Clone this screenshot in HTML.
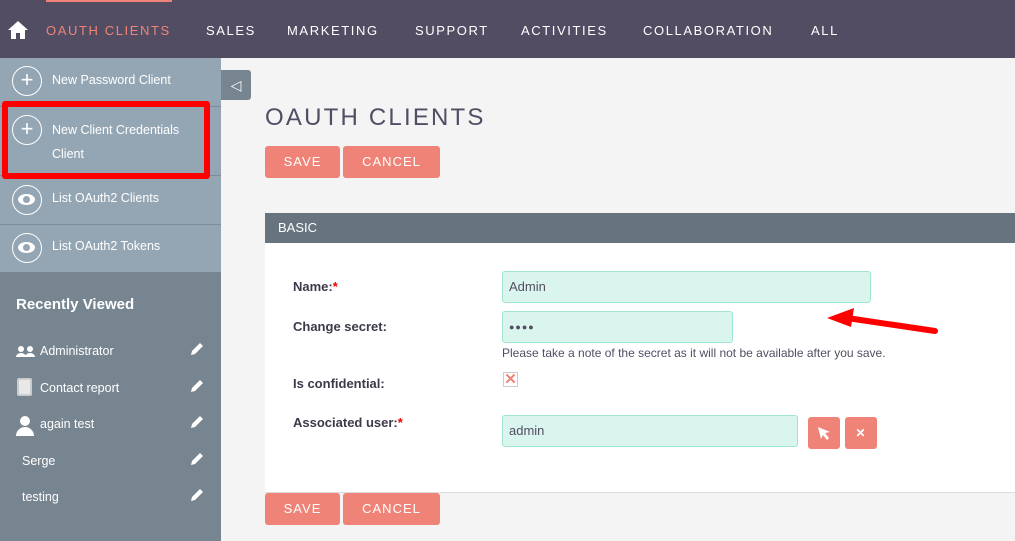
<!DOCTYPE html>
<html><head><style>
*{box-sizing:border-box;margin:0;padding:0}
body{width:1015px;height:541px;overflow:hidden;background:#f4f4f4;font-family:"Liberation Sans",sans-serif;position:relative}
.nav{position:absolute;left:0;top:0;width:1015px;height:58px;background:#534d64}
.nav span{position:absolute;top:23px;font-size:13px;letter-spacing:1.6px;color:#fff}
.side{position:absolute;left:0;top:58px;width:221px;height:483px;background:#778591}
.light{position:absolute;left:0;top:0;width:221px;height:214px;background:#94a6b4}
.item{position:absolute;left:0;width:221px;border-bottom:1px solid #7d8d9a;color:#fff;font-size:12.5px}
.circ{position:absolute;left:12px;width:30px;height:30px;border:1.5px solid #fff;border-radius:50%}
.lbl{position:absolute;left:52px}
.rv{position:absolute;color:#fff;font-size:12.5px}
.pen{position:absolute;left:190px}
.btn{position:absolute;height:32px;background:#f08377;color:#fff;font-size:13px;letter-spacing:1px;text-align:center;line-height:32px;border-radius:3px}
.lab{position:absolute;left:293px;font-size:13px;font-weight:bold;color:#3c3a4a}
.lab b{color:#e00}
.inp{position:absolute;background:#d9f5ed;border:1px solid #a0e5d0;border-radius:3px;font-size:13px;color:#534d64;padding-left:6px;line-height:30px}
</style></head><body>
<div class="nav">
<div style="position:absolute;left:46px;top:0;width:126px;height:2px;background:#f08377"></div>
<svg style="position:absolute;left:8px;top:21px" width="20" height="18" viewBox="0 0 20 18"><path d="M10 0L0 9h3v9h5v-6h4v6h5V9h3z" fill="#fff"/></svg>
<span style="left:46px;color:#f08377">OAUTH CLIENTS</span>
<span style="left:206px">SALES</span>
<span style="left:287px">MARKETING</span>
<span style="left:415px">SUPPORT</span>
<span style="left:521px">ACTIVITIES</span>
<span style="left:643px">COLLABORATION</span>
<span style="left:811px">ALL</span>
</div>
<div class="side"><div class="light"></div>
<div class="item" style="top:0;height:49px"><div class="circ" style="top:8px;text-align:center;line-height:25px;font-size:22px">+</div><div class="lbl" style="top:15px">New Password Client</div></div>
<div class="item" style="top:49px;height:69px"><div class="circ" style="top:8px;text-align:center;line-height:25px;font-size:22px">+</div><div class="lbl" style="line-height:24px;top:11px">New Client Credentials<br>Client</div></div>
<div class="item" style="top:118px;height:49px"><div class="circ" style="top:9px"><div style="position:absolute;left:5px;top:8px;width:17px;height:11px;border-radius:50%;background:#fff"></div><div style="position:absolute;left:10px;top:10px;width:7px;height:7px;border-radius:50%;background:#94a6b4"></div></div><div class="lbl" style="top:15px">List OAuth2 Clients</div></div>
<div class="item" style="top:167px;height:47px;border:none"><div class="circ" style="top:8px"><div style="position:absolute;left:5px;top:8px;width:17px;height:11px;border-radius:50%;background:#fff"></div><div style="position:absolute;left:10px;top:10px;width:7px;height:7px;border-radius:50%;background:#94a6b4"></div></div><div class="lbl" style="top:14px">List OAuth2 Tokens</div></div>
<div style="position:absolute;left:2px;top:43px;width:208px;height:78px;border:6px solid #f00;border-radius:3px"></div>
<div class="rv" style="left:16px;top:238px;font-size:15px;font-weight:bold">Recently Viewed</div>
<svg style="position:absolute;left:16px;top:288px" width="19" height="11"><circle cx="5" cy="3" r="3" fill="#fff"/><circle cx="14" cy="3" r="3" fill="#fff"/><path d="M0 11a5 4 0 0 1 10 0zM9 11a5 4 0 0 1 10 0z" fill="#fff"/></svg>
<div class="rv" style="left:40px;top:286px">Administrator</div>
<div style="position:absolute;left:17px;top:320px;width:15px;height:18px;background:#e8e8e8;border-radius:2px;border:2px solid #ccc"></div>
<div class="rv" style="left:40px;top:323px">Contact report</div>
<div style="position:absolute;left:20px;top:358px;width:10px;height:10px;border-radius:50%;background:#fff"></div>
<div style="position:absolute;left:16px;top:369px;width:18px;height:9px;border-radius:9px 9px 0 0;background:#fff"></div>
<div class="rv" style="left:40px;top:359px">again test</div>
<div class="rv" style="left:22px;top:396px">Serge</div>
<div class="rv" style="left:22px;top:432px">testing</div>
<svg class="pen" style="top:284px" width="14" height="14"><path d="M1 13l1-4 8-8 3 3-8 8z" fill="#fff"/></svg>
<svg class="pen" style="top:321px" width="14" height="14"><path d="M1 13l1-4 8-8 3 3-8 8z" fill="#fff"/></svg>
<svg class="pen" style="top:357px" width="14" height="14"><path d="M1 13l1-4 8-8 3 3-8 8z" fill="#fff"/></svg>
<svg class="pen" style="top:394px" width="14" height="14"><path d="M1 13l1-4 8-8 3 3-8 8z" fill="#fff"/></svg>
<svg class="pen" style="top:430px" width="14" height="14"><path d="M1 13l1-4 8-8 3 3-8 8z" fill="#fff"/></svg>
</div>
<div style="position:absolute;left:221px;top:70px;width:30px;height:30px;background:#778591;border-radius:0 3px 3px 0;color:#fff;font-size:14px;text-align:center;line-height:30px">◁</div>
<div style="position:absolute;left:265px;top:104px;font-size:24px;letter-spacing:2.2px;color:#534d64">OAUTH CLIENTS</div>
<div class="btn" style="left:265px;top:146px;width:75px">SAVE</div>
<div class="btn" style="left:343px;top:146px;width:97px">CANCEL</div>
<div style="position:absolute;left:265px;top:213px;width:750px;height:30px;background:#677480;color:#fff;font-size:13px;padding:7px 0 0 13px">BASIC</div>
<div style="position:absolute;left:265px;top:243px;width:750px;height:250px;background:#fff;border-bottom:1px solid #ddd"></div>
<div class="lab" style="top:279px">Name:<b>*</b></div>
<div class="lab" style="top:319px">Change secret:</div>
<div class="lab" style="top:376px">Is confidential:</div>
<div class="lab" style="top:415px">Associated user:<b>*</b></div>
<div class="inp" style="left:502px;top:271px;width:369px;height:32px">Admin</div>
<div class="inp" style="left:502px;top:311px;width:231px;height:32px;font-size:9px;letter-spacing:1px">●●●●</div>
<div style="position:absolute;left:502px;top:346px;font-size:12px;color:#534d64">Please take a note of the secret as it will not be available after you save.</div>
<div style="position:absolute;left:503px;top:372px;width:15px;height:15px;border:1px solid #ccc;color:#f08377;font-size:15px;line-height:13px;text-align:center;font-weight:bold">✕</div>
<div class="inp" style="left:502px;top:415px;width:296px;height:32px">admin</div>
<div class="btn" style="left:808px;top:417px;width:32px;height:32px"><svg style="margin-top:10px" width="12" height="13"><path d="M0 0L12 5 7 6 11 11 9 13 5 8 3 12z" fill="#fff"/></svg></div>
<div class="btn" style="left:845px;top:417px;width:32px;height:32px;font-size:12px;font-weight:bold">✕</div>
<svg style="position:absolute;left:825px;top:305px" width="115" height="30"><path d="M110 26L22 13" stroke="#f00" stroke-width="6" stroke-linecap="round"/><path d="M2 13L29 3L26 22Z" fill="#f00"/></svg>
<div class="btn" style="left:265px;top:493px;width:75px">SAVE</div>
<div class="btn" style="left:343px;top:493px;width:97px">CANCEL</div>
</body></html>
